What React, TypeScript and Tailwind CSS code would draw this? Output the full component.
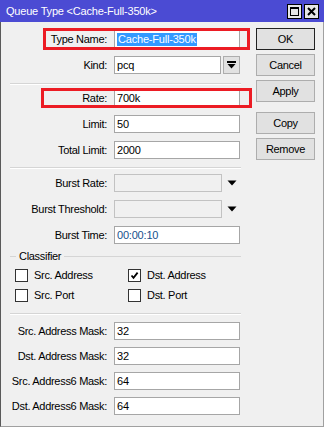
import React from "react";

const font = { fontFamily: '"Liberation Sans", Arial, sans-serif' };

function Label({ children }: { children: React.ReactNode }) {
  return (
    <div className="w-[106px] shrink-0 text-right whitespace-nowrap tracking-[-0.3px]">{children}</div>
  );
}

function Input({
  value,
  width = 126,
  className = "",
}: {
  value: React.ReactNode;
  width?: number;
  className?: string;
}) {
  return (
    <div
      className={`ml-[7px] box-border h-[18px] border border-[#a6a6a6] bg-white pl-[2px] leading-[16px] whitespace-nowrap tracking-[-0.2px] ${className}`}
      style={{ width }}
    >
      {value}
    </div>
  );
}

function Row({ label, children, className = "" }: { label: string; children: React.ReactNode; className?: string }) {
  return (
    <div className={`flex h-[18px] items-center ${className}`}>
      <Label>{label}</Label>
      {children}
    </div>
  );
}

function Sep({ className = "" }: { className?: string }) {
  return (
    <div className={`ml-[9px] w-[231px] ${className}`}>
      <div className="h-px bg-[#d5d5d5]" />
      <div className="h-px bg-white" />
    </div>
  );
}

function Tri() {
  return (
    <svg width="10" height="6" viewBox="0 0 10 6" className="ml-[5px]">
      <polygon points="0.5,0.5 9.5,0.5 5,5.5" fill="#000" />
    </svg>
  );
}

function Check({ checked, label, w }: { checked?: boolean; label: string; w?: number }) {
  return (
    <div className="flex items-center" style={w ? { width: w } : undefined}>
      <div className="box-border flex h-[13px] w-[13px] items-center justify-center border border-[#333] bg-white">
        {checked && (
          <svg width="9" height="9" viewBox="0 0 9 9">
            <path d="M1.5 4.5 L3.5 6.8 L7.6 1.6" stroke="#000" strokeWidth="1.8" fill="none" />
          </svg>
        )}
      </div>
      <span className="ml-[6px] tracking-[-0.3px]">{label}</span>
    </div>
  );
}

function Btn({ children, def, className = "" }: { children: React.ReactNode; def?: boolean; className?: string }) {
  return (
    <div
      className={`box-border flex h-[22px] w-[59px] items-center justify-center border bg-[#e1e1e1] tracking-[-0.3px] ${
        def ? "border-[#222]" : "border-[#adadad]"
      } ${className}`}
    >
      {children}
    </div>
  );
}

export default function App() {
  return (
    <div
      className="relative box-border h-[427px] w-[324px] overflow-hidden bg-[#f0f0f0] text-[11px] text-black"
      style={font}
    >
      {/* Title bar */}
      <div className="flex h-[22px] items-center bg-[#4b4bd3] pr-[5px]">
        <div className="pl-[6px] text-white tracking-[-0.2px] leading-[13px]">Queue Type &lt;Cache-Full-350k&gt;</div>
        <div className="ml-auto flex gap-[2px] pt-[1px]">
          <div className="box-border flex h-[15px] w-[15px] items-center justify-center border border-black bg-[#e6e6e6]">
            <svg width="9" height="9" viewBox="0 0 9 9">
              <rect x="0.5" y="0.5" width="8" height="8" fill="none" stroke="#000" strokeWidth="1" />
              <rect x="0" y="0" width="9" height="2" fill="#000" />
            </svg>
          </div>
          <div className="box-border flex h-[15px] w-[15px] items-center justify-center border border-black bg-[#e6e6e6]">
            <svg width="9" height="9" viewBox="0 0 9 9">
              <path d="M1 1 L8 8 M8 1 L1 8" stroke="#000" strokeWidth="2" />
            </svg>
          </div>
        </div>
      </div>

      {/* Body */}
      <div className="box-border flex h-[405px] border-b border-l border-r border-b-[#a0a0a0] border-l-[#5a5a5a] border-r-[#a0a0a0]">
        {/* Left column */}
        <div className="w-[255px] shrink-0 pt-[8px]">
          <div className="flex flex-col gap-[8px]">
            <Row label="Type Name:">
              <Input
                value={<span className="bg-[#3399ff] px-[1px] text-white leading-[13px] inline-block">Cache-Full-350k</span>}
              />
            </Row>
            <Row label="Kind:">
              <Input value="pcq" width={107} />
              <div className="ml-[2px] box-border flex h-[18px] w-[17px] items-center justify-center border border-[#adadad] bg-[#e1e1e1]">
                <svg width="9" height="8" viewBox="0 0 9 8">
                  <rect x="0" y="0" width="9" height="2" fill="#000" />
                  <polygon points="0.5,3 8.5,3 4.5,7.5" fill="#000" />
                </svg>
              </div>
            </Row>
          </div>
          <Sep className="mt-[9px]" />
          <div className="mt-[4px] flex flex-col gap-[8px]">
            <Row label="Rate:">
              <Input value="700k" />
            </Row>
            <Row label="Limit:">
              <Input value="50" />
            </Row>
            <Row label="Total Limit:">
              <Input value="2000" />
            </Row>
          </div>
          <Sep className="mt-[8px]" />
          <div className="mt-[5px] flex flex-col gap-[8px]">
            <Row label="Burst Rate:">
              <Input value="" width={108} className="!bg-[#f0f0f0] !border-[#c2c2c2]" />
              <Tri />
            </Row>
            <Row label="Burst Threshold:">
              <Input value="" width={108} className="!bg-[#f0f0f0] !border-[#c2c2c2]" />
              <Tri />
            </Row>
            <Row label="Burst Time:">
              <Input value={<span className="text-[#16508c]">00:00:10</span>} />
            </Row>
          </div>
          {/* Classifier */}
          <div className="mt-[6px] flex h-[13px] items-center pl-[9px]">
            <div className="h-px w-[6px] bg-[#d5d5d5]" />
            <span className="px-[3px] leading-[13px] tracking-[-0.3px]">Classifier</span>
            <div className="h-px w-[177px] bg-[#d5d5d5]" />
          </div>
          <div className="mt-[6px] flex flex-col gap-[7px] pl-[14px]">
            <div className="flex h-[13px] items-center">
              <Check label="Src. Address" w={113} />
              <Check label="Dst. Address" checked />
            </div>
            <div className="flex h-[13px] items-center">
              <Check label="Src. Port" w={113} />
              <Check label="Dst. Port" />
            </div>
          </div>
          <Sep className="mt-[11px]" />
          <div className="mt-[7px] flex flex-col gap-[7px]">
            <Row label="Src. Address Mask:">
              <Input value="32" />
            </Row>
            <Row label="Dst. Address Mask:">
              <Input value="32" />
            </Row>
            <Row label="Src. Address6 Mask:">
              <Input value="64" />
            </Row>
            <Row label="Dst. Address6 Mask:">
              <Input value="64" />
            </Row>
          </div>
        </div>

        {/* Right column */}
        <div className="flex flex-col pt-[6px]">
          <Btn def>OK</Btn>
          <Btn className="mt-[4px]">Cancel</Btn>
          <Btn className="mt-[4px]">Apply</Btn>
          <Btn className="mt-[10px]">Copy</Btn>
          <Btn className="mt-[4px]">Remove</Btn>
        </div>
      </div>

      {/* Red highlight boxes */}
      <div className="pointer-events-none absolute left-[43px] top-[28px] h-[22px] w-[207px] border-[3px] border-[#ec1c24]" />
      <div className="pointer-events-none absolute left-[41px] top-[88px] h-[20px] w-[211px] border-[3px] border-[#ec1c24]" />
    </div>
  );
}
